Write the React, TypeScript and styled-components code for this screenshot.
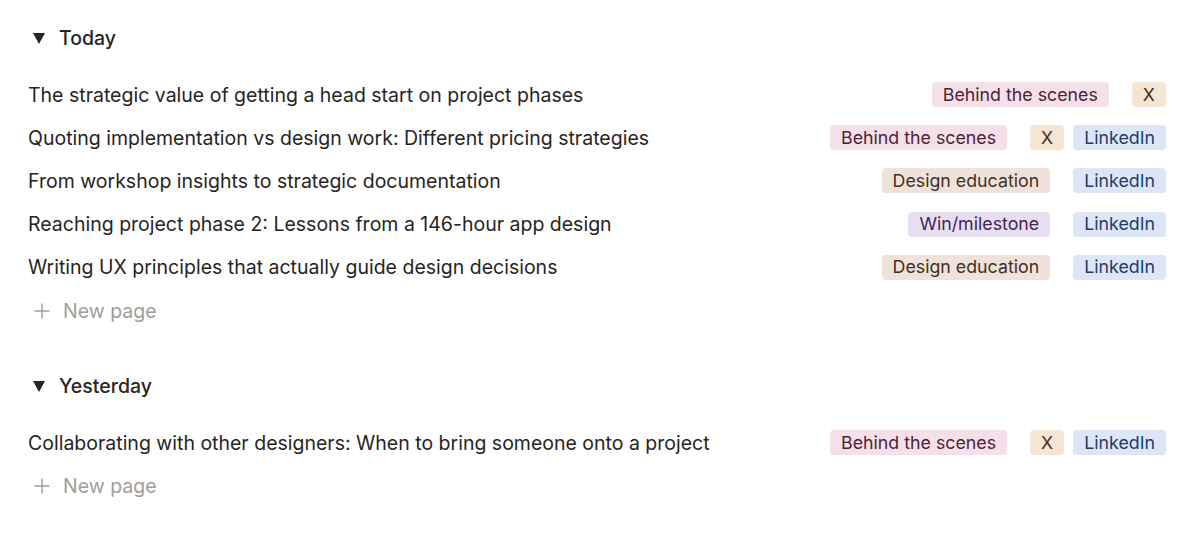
import React from 'react';
import styled, { createGlobalStyle } from 'styled-components';

const GlobalStyle = createGlobalStyle`
  html, body {
    margin: 0;
    padding: 0;
    background: #ffffff;
  }
  body {
    font-family: Inter, "Noto Sans", "Liberation Sans", sans-serif;
    color: rgb(38, 37, 34);
    -webkit-font-smoothing: antialiased;
  }
`;

const Page = styled.div`
  padding: 23px 33px 0 28px;
`;

const Group = styled.section`
  margin-bottom: 39px;
`;

const GroupHeader = styled.div`
  display: flex;
  align-items: center;
  gap: 14px;
  height: 30px;
  padding-left: 5px;
  margin-bottom: 20px;
  font-size: 19.5px;
  font-weight: 500;
`;

const Caret = styled.span`
  display: inline-block;
  width: 0;
  height: 0;
  border-left: 6.5px solid transparent;
  border-right: 6.5px solid transparent;
  border-top: 11px solid rgb(38, 37, 34);
`;

const Row = styled.div`
  display: flex;
  align-items: center;
  justify-content: space-between;
  height: 43.2px;
`;

const Title = styled.div`
  font-size: 19.5px;
  font-weight: 400;
  white-space: nowrap;
`;

const Props = styled.div`
  display: flex;
  align-items: center;
  gap: 23px;
`;

const TagList = styled.div`
  display: flex;
  align-items: center;
  gap: 9px;
`;

type Tone = 'pink' | 'orange' | 'blue' | 'brown' | 'purple';

const tones: Record<Tone, { bg: string; fg: string }> = {
  pink: { bg: 'rgb(245, 224, 233)', fg: 'rgb(76, 35, 55)' },
  orange: { bg: 'rgb(244, 229, 212)', fg: 'rgb(73, 47, 20)' },
  blue: { bg: 'rgb(221, 230, 246)', fg: 'rgb(33, 61, 104)' },
  brown: { bg: 'rgb(238, 226, 218)', fg: 'rgb(68, 48, 36)' },
  purple: { bg: 'rgb(232, 222, 241)', fg: 'rgb(64, 38, 88)' },
};

const Tag = styled.span<{ $tone: Tone }>`
  display: inline-flex;
  align-items: center;
  height: 25px;
  padding: 0 11px;
  border-radius: 4px;
  font-size: 17.8px;
  line-height: 1;
  white-space: nowrap;
  background: ${p => tones[p.$tone].bg};
  color: ${p => tones[p.$tone].fg};
`;

const NewPage = styled.div`
  display: flex;
  align-items: center;
  gap: 13px;
  height: 43.2px;
  padding-left: 6px;
  font-size: 19.5px;
  color: rgb(160, 158, 153);
`;

const PlusIcon = () => (
  <svg width="16" height="16" viewBox="0 0 16 16" fill="none">
    <path d="M8 1v14M1 8h14" stroke="rgb(160,158,153)" strokeWidth="1.4" strokeLinecap="round" />
  </svg>
);

type Item = {
  title: string;
  category: { label: string; tone: Tone };
  platforms: { label: string; tone: Tone }[];
};

const cat = {
  behind: { label: 'Behind the scenes', tone: 'pink' as Tone },
  education: { label: 'Design education', tone: 'brown' as Tone },
  win: { label: 'Win/milestone', tone: 'purple' as Tone },
};

const X = { label: 'X', tone: 'orange' as Tone };
const LinkedIn = { label: 'LinkedIn', tone: 'blue' as Tone };

const groups: { name: string; items: Item[] }[] = [
  {
    name: 'Today',
    items: [
      { title: 'The strategic value of getting a head start on project phases', category: cat.behind, platforms: [X] },
      { title: 'Quoting implementation vs design work: Different pricing strategies', category: cat.behind, platforms: [X, LinkedIn] },
      { title: 'From workshop insights to strategic documentation', category: cat.education, platforms: [LinkedIn] },
      { title: 'Reaching project phase 2: Lessons from a 146-hour app design', category: cat.win, platforms: [LinkedIn] },
      { title: 'Writing UX principles that actually guide design decisions', category: cat.education, platforms: [LinkedIn] },
    ],
  },
  {
    name: 'Yesterday',
    items: [
      { title: 'Collaborating with other designers: When to bring someone onto a project', category: cat.behind, platforms: [X, LinkedIn] },
    ],
  },
];

export default function App() {
  return (
    <>
      <GlobalStyle />
      <Page>
        {groups.map(g => (
          <Group key={g.name}>
            <GroupHeader>
              <Caret />
              {g.name}
            </GroupHeader>
            {g.items.map(item => (
              <Row key={item.title}>
                <Title>{item.title}</Title>
                <Props>
                  <Tag $tone={item.category.tone}>{item.category.label}</Tag>
                  <TagList>
                    {item.platforms.map(p => (
                      <Tag key={p.label} $tone={p.tone}>{p.label}</Tag>
                    ))}
                  </TagList>
                </Props>
              </Row>
            ))}
            <NewPage>
              <PlusIcon />
              New page
            </NewPage>
          </Group>
        ))}
      </Page>
    </>
  );
}
